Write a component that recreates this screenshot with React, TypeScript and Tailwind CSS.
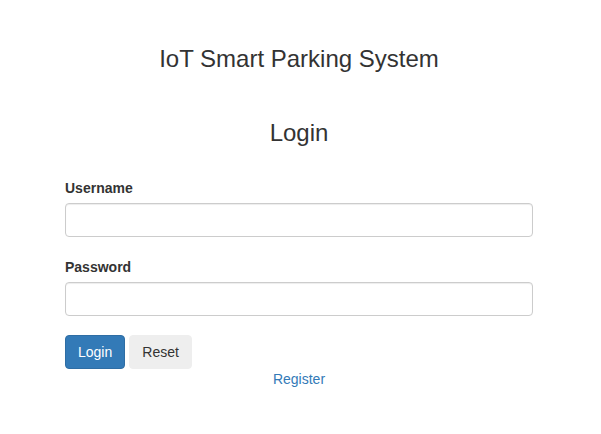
import React from 'react';

export default function App() {
  return (
    <div className="min-h-[434px] w-full bg-white text-[#333] font-['Liberation_Sans',Arial,sans-serif] text-[14px] leading-[20px]">
      <div className="pl-[65px] pr-[68px] pt-[46px]">
        <h3 className="text-center text-[24px] leading-[26px] font-normal">IoT Smart Parking System</h3>
        <h3 className="mt-[48px] text-center text-[24px] leading-[26px] font-normal">Login</h3>

        <form className="mt-[32px]" onSubmit={(e) => e.preventDefault()}>
          <div className="mb-[20px]">
            <label className="block font-bold mb-[5px]">Username</label>
            <input
              type="text"
              className="block w-full h-[34px] px-3 border border-[#ccc] rounded-[4px] shadow-[inset_0_1px_1px_rgba(0,0,0,0.075)] outline-none"
            />
          </div>
          <div className="mb-[19px]">
            <label className="block font-bold mb-[5px]">Password</label>
            <input
              type="password"
              className="block w-full h-[34px] px-3 border border-[#ccc] rounded-[4px] shadow-[inset_0_1px_1px_rgba(0,0,0,0.075)] outline-none"
            />
          </div>
          <div className="flex gap-[4px]">
            <button
              type="submit"
              className="h-[34px] px-[12px] rounded-[4px] border border-[#2e6da4] bg-[#337ab7] text-white"
            >
              Login
            </button>
            <button
              type="reset"
              className="h-[34px] px-[12px] rounded-[4px] border border-[#eee] bg-[#eee] text-[#333]"
            >
              Reset
            </button>
          </div>
          <div className="text-center">
            <a href="#" className="text-[#337ab7]">Register</a>
          </div>
        </form>
      </div>
    </div>
  );
}
